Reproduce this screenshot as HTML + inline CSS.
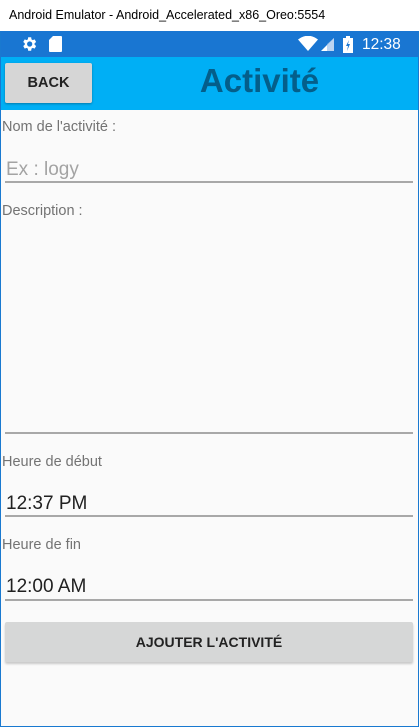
<!DOCTYPE html>
<html><head><meta charset="utf-8"><style>
*{margin:0;padding:0;box-sizing:border-box}
body{width:419px;height:727px;position:relative;background:#fafafa;font-family:"Liberation Sans",sans-serif;overflow:hidden}
.a{position:absolute}
.lbl{font-size:14.5px;color:#737373;left:2px}
.line{left:5px;width:408px;height:2px;background:#a8a8a8}
.val{font-size:19px;color:#212121;left:6px}
</style></head><body>
<div class="a" style="left:0;top:0;width:419px;height:31px;background:#fff"></div>
<div class="a" style="left:9px;top:8px;font-size:12.5px;color:#000">Android Emulator - Android_Accelerated_x86_Oreo:5554</div>
<div class="a" style="left:0;top:31px;width:419px;height:26px;background:#1976d2"></div>
<svg class="a" style="left:20px;top:35px" width="18" height="18" viewBox="0 0 24 24"><path fill="#fff" d="M19.4 13a7.5 7.5 0 0 0 0-2l2.1-1.6-2-3.5-2.5 1a7 7 0 0 0-1.7-1L14.9 3h-4l-.4 2.9a7 7 0 0 0-1.7 1l-2.5-1-2 3.5L6.4 11a7.5 7.5 0 0 0 0 2l-2.1 1.6 2 3.5 2.5-1a7 7 0 0 0 1.7 1l.4 2.9h4l.4-2.9a7 7 0 0 0 1.7-1l2.5 1 2-3.5zM12.9 15.5a3.5 3.5 0 1 1 0-7 3.5 3.5 0 0 1 0 7z"/></svg>
<svg class="a" style="left:49px;top:36px" width="13" height="16" viewBox="0 0 13 16"><path fill="#fff" d="M4 0h8a1 1 0 0 1 1 1v14a1 1 0 0 1-1 1H1a1 1 0 0 1-1-1V4z"/></svg>
<svg class="a" style="left:298px;top:36px" width="20" height="15" viewBox="0 0 20 15"><path fill="#fff" d="M0 3.5Q10-4 20 3.5L10 15z"/></svg>
<svg class="a" style="left:321px;top:38px" width="13" height="13" viewBox="0 0 13 13"><path fill="#fff" d="M13 0v13H0z"/><path fill="#8fb8e8" d="M13 0v13H6V6z" opacity=".6"/></svg>
<svg class="a" style="left:343px;top:36px" width="10" height="17" viewBox="0 0 10 17"><path fill="#fff" d="M3 0h4v2h3v15H0V2h3z"/><path fill="#1976d2" d="M6 4L3 10h2l-1 5 3-7H5z"/></svg>
<div class="a" style="left:362px;top:36px;font-size:15.5px;color:#fff">12:38</div>
<div class="a" style="left:0;top:57px;width:419px;height:53px;background:#00aff5"></div>
<div class="a" style="left:5px;top:63px;width:87px;height:40px;background:#d6d6d6;border-radius:2px;box-shadow:0 1px 2px rgba(0,0,0,.3);font-size:14.5px;font-weight:bold;color:#222;text-align:center;line-height:41px">BACK</div>
<div class="a" style="left:92px;top:62px;width:335px;text-align:center;font-size:33px;font-weight:bold;color:#045e8a">Activité</div>
<div class="a lbl" style="top:119px">Nom de l'activité :</div>
<div class="a" style="left:6px;top:159px;font-size:19px;color:#a3a3a3">Ex : logy</div>
<div class="a line" style="top:181px"></div>
<div class="a lbl" style="top:203px">Description :</div>
<div class="a line" style="top:432px"></div>
<div class="a lbl" style="top:454px">Heure de début</div>
<div class="a val" style="top:493px">12:37 PM</div>
<div class="a line" style="top:515px"></div>
<div class="a lbl" style="top:537px">Heure de fin</div>
<div class="a val" style="top:576px">12:00 AM</div>
<div class="a line" style="top:599px"></div>
<div class="a" style="left:5px;top:622px;width:408px;height:40px;background:#d6d7d7;border-radius:2px;box-shadow:0 2px 2px rgba(0,0,0,.2);font-size:14px;font-weight:bold;color:#222;text-align:center;line-height:41px">AJOUTER L'ACTIVITÉ</div>
<div class="a" style="left:0;top:31px;width:1px;height:696px;background:#1979d0"></div>
<div class="a" style="right:0;top:31px;width:1px;height:696px;background:#1979d0"></div>
<div class="a" style="left:0;bottom:0;width:419px;height:1px;background:#1979d0"></div>
</body></html>
